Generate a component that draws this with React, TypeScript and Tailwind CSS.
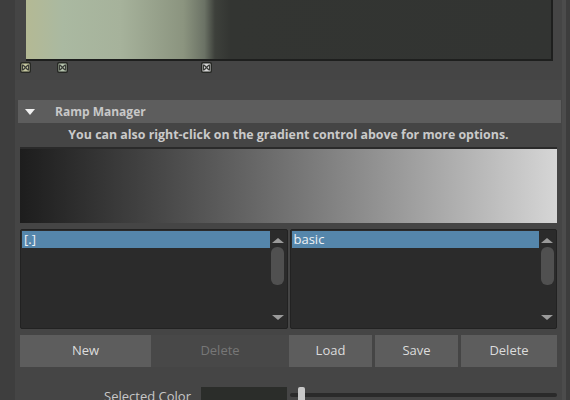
import React from 'react';

const font = { fontFamily: '"Open Sans", "Noto Sans", sans-serif' };

function Marker({ left, fill }: { left: number; fill: string }) {
    return (
        <svg className="absolute top-[1px]" style={{ left }} width="11" height="11" viewBox="0 0 11 11">
            <rect x="0" y="0" width="11" height="11" rx="2" fill="#262824" />
            <rect x="1.5" y="1.5" width="8" height="8" rx="0.5" fill={fill} />
            <path d="M3 3 L8 8 M8 3 L3 8" stroke="#3a3c38" strokeWidth="1.3" />
            <path d="M2.5 2.5 V8.5 M8.5 2.5 V8.5" stroke="#3a3c38" strokeWidth="1" />
        </svg>
    );
}

function Scrollbar() {
    return (
        <div className="w-[16px] flex flex-col items-center bg-[#2b2b2b] py-[2px]">
            <div className="w-0 h-0 mt-[5px] border-l-[6px] border-r-[6px] border-b-[5px] border-l-transparent border-r-transparent border-b-[#9a9a9a]" />
            <div className="w-[13px] h-[38px] mt-[4px] rounded-[6px] bg-[#505050]" />
            <div className="flex-1" />
            <div className="w-0 h-0 mb-[5px] border-l-[6px] border-r-[6px] border-t-[5px] border-l-transparent border-r-transparent border-t-[#9a9a9a]" />
        </div>
    );
}

function List({ item }: { item: string }) {
    return (
        <div className="flex-1 flex h-[100px] bg-[#2b2b2b] border border-[#222] rounded-[2px] p-[1px]">
            <div className="flex-1 flex flex-col">
                <div className="h-[17px] bg-[#5586ab] text-[#eef2f5] text-[13px] leading-[17px] pl-[2px]">{item}</div>
            </div>
            <Scrollbar />
        </div>
    );
}

function Btn({ label, w, disabled }: { label: string; w: string; disabled?: boolean }) {
    return (
        <div
            className={`${w} h-[32px] flex items-center justify-center text-[13px] ${
                disabled ? 'text-[#777777] bg-[#484848]' : 'text-[#dcdcdc] bg-[#5d5d5d]'
            }`}
        >
            {label}
        </div>
    );
}

export default function App() {
    return (
        <div className="w-[570px] h-[400px] overflow-hidden flex bg-[#3d3d3d]" style={font}>
            <div className="w-[15px] bg-[#3e3e3e]" />
            <div className="w-[547px] bg-[#454545]">
                {/* color gradient */}
                <div className="pl-[11px] pr-[9px]">
                    <div
                        className="h-[61px] border-b-2 border-r-2 border-[#1e1f1e]"
                        style={{
                            background:
                                'linear-gradient(to right, #b4b994 0%, #aab9a1 7%, #a6b29b 18%, #8b947f 30%, #6b7265 34%, #3d403b 36%, #333532 39%, #323432 100%)',
                        }}
                    />
                </div>
                <div className="relative h-[19px]">
                    <Marker left={5} fill="#c7c9a0" />
                    <Marker left={42} fill="#b5c4ad" />
                    <Marker left={186} fill="#d8d8d8" />
                </div>
                <div className="h-[20px] bg-[#474747]" />

                {/* header */}
                <div className="ml-[3px] mr-[1px] h-[23px] bg-[#5d5d5d] flex items-center">
                    <div className="ml-[7px] w-0 h-0 border-l-[5px] border-r-[5px] border-t-[6px] border-l-transparent border-r-transparent border-t-[#f0f0f0]" />
                    <span className="ml-[20px] text-[12px] font-bold text-[#c8c8c8]">Ramp Manager</span>
                </div>
                <div className="h-[24px] flex items-center justify-center text-[12.4px] font-bold text-[#cacaca]">
                    You can also right-click on the gradient control above for more options.
                </div>

                {/* gray ramp */}
                <div className="mx-[5px] h-[76px] border-t-2 border-[#2a2a2a] bg-gradient-to-r from-[#1d1d1d] to-[#d6d6d6]" />

                {/* lists */}
                <div className="mx-[5px] mt-[6px] flex gap-[2px]">
                    <List item="[.]" />
                    <List item="basic" />
                </div>

                {/* buttons */}
                <div className="mx-[5px] mt-[6px] flex">
                    <Btn label="New" w="w-[131px]" />
                    <Btn label="Delete" w="w-[138px]" disabled />
                    <div className="flex-1 flex gap-[3px]">
                        <Btn label="Load" w="w-[83px]" />
                        <Btn label="Save" w="w-[83px]" />
                        <Btn label="Delete" w="flex-1" />
                    </div>
                </div>

                {/* selected color */}
                <div className="mt-[20px] flex items-start">
                    <div className="w-[176px] text-right text-[13px] leading-[18px] text-[#c8c8c8]">Selected Color</div>
                    <div className="ml-[10px] w-[86px] h-[20px] bg-[#2b2d2a]" />
                    <div className="ml-[3px] w-[267px] relative h-[20px]">
                        <div className="absolute left-0 right-0 top-[6px] h-[4px] rounded bg-[#2a2a2a]" />
                        <div className="absolute left-[8px] top-0 w-[7px] h-[20px] rounded-[2px] bg-[#c8c8c8]" />
                    </div>
                </div>
            </div>
            <div className="w-[8px] flex">
                <div className="w-[4px] bg-[#4c4c4c]" />
                <div className="w-[4px] bg-[#3d3d3d]" />
            </div>
        </div>
    );
}
